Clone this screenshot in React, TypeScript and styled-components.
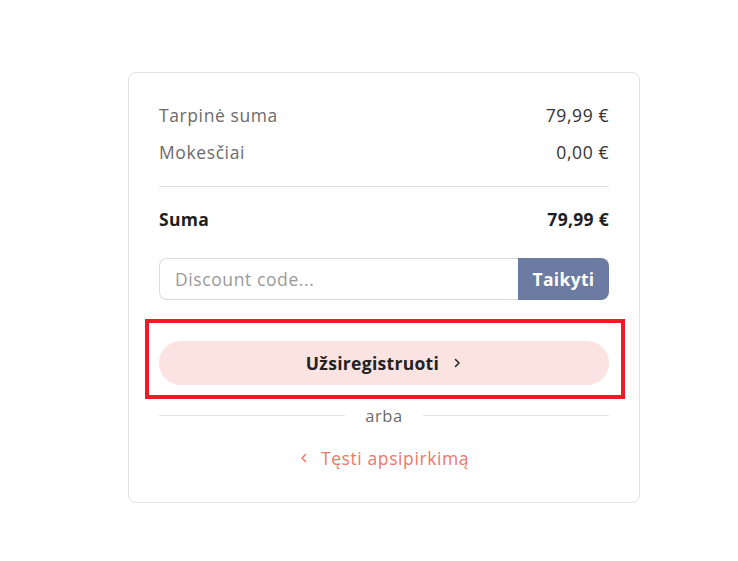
import styled, { createGlobalStyle } from "styled-components";

const GlobalStyle = createGlobalStyle`
  html, body {
    margin: 0;
    padding: 0;
    background: #ffffff;
  }
  body {
    font-family: "Open Sans", "DejaVu Sans", sans-serif;
    letter-spacing: 0.6px;
  }
`;

const Page = styled.div`
  padding: 72px 0 0 128px;
`;

const Card = styled.div`
  box-sizing: border-box;
  width: 512px;
  height: 431px;
  border: 1px solid #e2e2e2;
  border-radius: 8px;
  padding: 29px 30px 0 30px;
  display: flex;
  flex-direction: column;
`;

const Row = styled.div<{ $total?: boolean }>`
  display: flex;
  justify-content: space-between;
  align-items: center;
  height: 26px;
  font-size: 17.5px;
  font-weight: ${(p) => (p.$total ? 700 : 400)};
  letter-spacing: ${(p) => (p.$total ? "0.3px" : "0.6px")};
  margin-bottom: 11px;
`;

const Label = styled.span<{ $total?: boolean }>`
  color: ${(p) => (p.$total ? "#1e1e1e" : "#6b6b6b")};
`;

const Value = styled.span<{ $total?: boolean }>`
  color: ${(p) => (p.$total ? "#1e1e1e" : "#333333")};
`;

const Divider = styled.hr`
  border: none;
  border-top: 1px solid #e0e0e0;
  margin: 10px 0 19px 0;
  width: 100%;
`;

const DiscountForm = styled.div`
  display: flex;
  height: 42px;
  margin-top: 15px;
`;

const DiscountInput = styled.input`
  flex: 1;
  box-sizing: border-box;
  border: 1px solid #dcdcdc;
  border-right: none;
  border-radius: 8px 0 0 8px;
  padding: 0 15px;
  font-family: inherit;
  font-size: 17.5px;
  letter-spacing: 0.6px;
  color: #333;
  outline: none;
  &::placeholder {
    color: #9a9a9a;
  }
`;

const ApplyButton = styled.button`
  width: 91px;
  border: none;
  border-radius: 0 8px 8px 0;
  background: #6b7ba1;
  color: #ffffff;
  font-family: inherit;
  font-size: 17.5px;
  letter-spacing: 0.3px;
  font-weight: 700;
`;

const Highlight = styled.div`
  position: relative;
  margin-top: 41px;
  &::after {
    content: "";
    position: absolute;
    top: -22px;
    bottom: -14px;
    left: -14px;
    right: -16px;
    border: 4px solid #ed1c24;
    pointer-events: none;
  }
`;

const RegisterButton = styled.button`
  width: 100%;
  height: 44px;
  border: none;
  border-radius: 22px;
  background: #fae3e1;
  color: #222222;
  font-family: inherit;
  font-size: 17.5px;
  letter-spacing: 0.3px;
  font-weight: 700;
  display: flex;
  align-items: center;
  justify-content: center;
  gap: 13px;
`;

const OrLine = styled.div`
  display: flex;
  align-items: center;
  gap: 20px;
  margin-top: 19px;
  color: #6b6b6b;
  font-size: 16.5px;
  &::before,
  &::after {
    content: "";
    flex: 1;
    border-top: 1px solid #e4e4e4;
  }
`;

const BackLink = styled.a`
  align-self: center;
  display: flex;
  align-items: center;
  gap: 12px;
  margin-top: 19px;
  color: #f0766a;
  font-size: 17.5px;
  text-decoration: none;
`;

const Chevron = ({ dir }: { dir: "left" | "right" }) => (
  <svg width="10" height="10" viewBox="0 0 10 10" fill="none">
    <path
      d={dir === "right" ? "M3.5 1.5 L7 5 L3.5 8.5" : "M6.5 1.5 L3 5 L6.5 8.5"}
      stroke="currentColor"
      strokeWidth="1.5"
      strokeLinecap="round"
      strokeLinejoin="round"
    />
  </svg>
);

export default function App() {
  return (
    <>
      <GlobalStyle />
      <Page>
        <Card>
          <Row>
            <Label>Tarpinė suma</Label>
            <Value>79,99 €</Value>
          </Row>
          <Row>
            <Label>Mokesčiai</Label>
            <Value>0,00 €</Value>
          </Row>
          <Divider />
          <Row $total>
            <Label $total>Suma</Label>
            <Value $total>79,99 €</Value>
          </Row>
          <DiscountForm>
            <DiscountInput placeholder="Discount code..." />
            <ApplyButton>Taikyti</ApplyButton>
          </DiscountForm>
          <Highlight>
            <RegisterButton>
              Užsiregistruoti
              <Chevron dir="right" />
            </RegisterButton>
          </Highlight>
          <OrLine>arba</OrLine>
          <BackLink href="#">
            <Chevron dir="left" />
            Tęsti apsipirkimą
          </BackLink>
        </Card>
      </Page>
    </>
  );
}
